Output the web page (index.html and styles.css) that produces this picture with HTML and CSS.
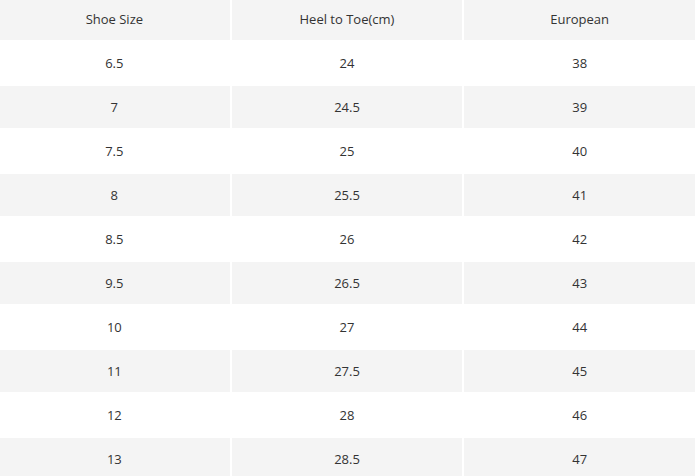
FILE: index.html
```html
<!DOCTYPE html>
<html>
<head>
<meta charset="utf-8">
<link rel="stylesheet" href="styles.css">
</head>
<body>
<table class="size-table">
  <thead>
    <tr><th>Shoe Size</th><th>Heel to Toe(cm)</th><th>European</th></tr>
  </thead>
  <tbody>
    <tr><td>6.5</td><td>24</td><td>38</td></tr>
    <tr><td>7</td><td>24.5</td><td>39</td></tr>
    <tr><td>7.5</td><td>25</td><td>40</td></tr>
    <tr><td>8</td><td>25.5</td><td>41</td></tr>
    <tr><td>8.5</td><td>26</td><td>42</td></tr>
    <tr><td>9.5</td><td>26.5</td><td>43</td></tr>
    <tr><td>10</td><td>27</td><td>44</td></tr>
    <tr><td>11</td><td>27.5</td><td>45</td></tr>
    <tr><td>12</td><td>28</td><td>46</td></tr>
    <tr><td>13</td><td>28.5</td><td>47</td></tr>
  </tbody>
</table>
</body>
</html>
```
FILE: styles.css
```css
html, body {
  margin: 0;
  padding: 0;
  background: #fff;
  overflow: hidden;
}
.size-table {
  width: 700px;
  margin: -4px 0 0 -3px;
  border-collapse: separate;
  border-spacing: 2px;
  table-layout: fixed;
  font-family: "Open Sans", sans-serif;
  font-size: 13px;
  color: #333;
}
.size-table th,
.size-table td {
  height: 42px;
  padding: 0;
  text-align: center;
  vertical-align: middle;
  font-weight: normal;
}
.size-table thead th {
  background: #f4f4f4;
}
.size-table tbody tr:nth-child(even) td {
  background: #f4f4f4;
}
```
